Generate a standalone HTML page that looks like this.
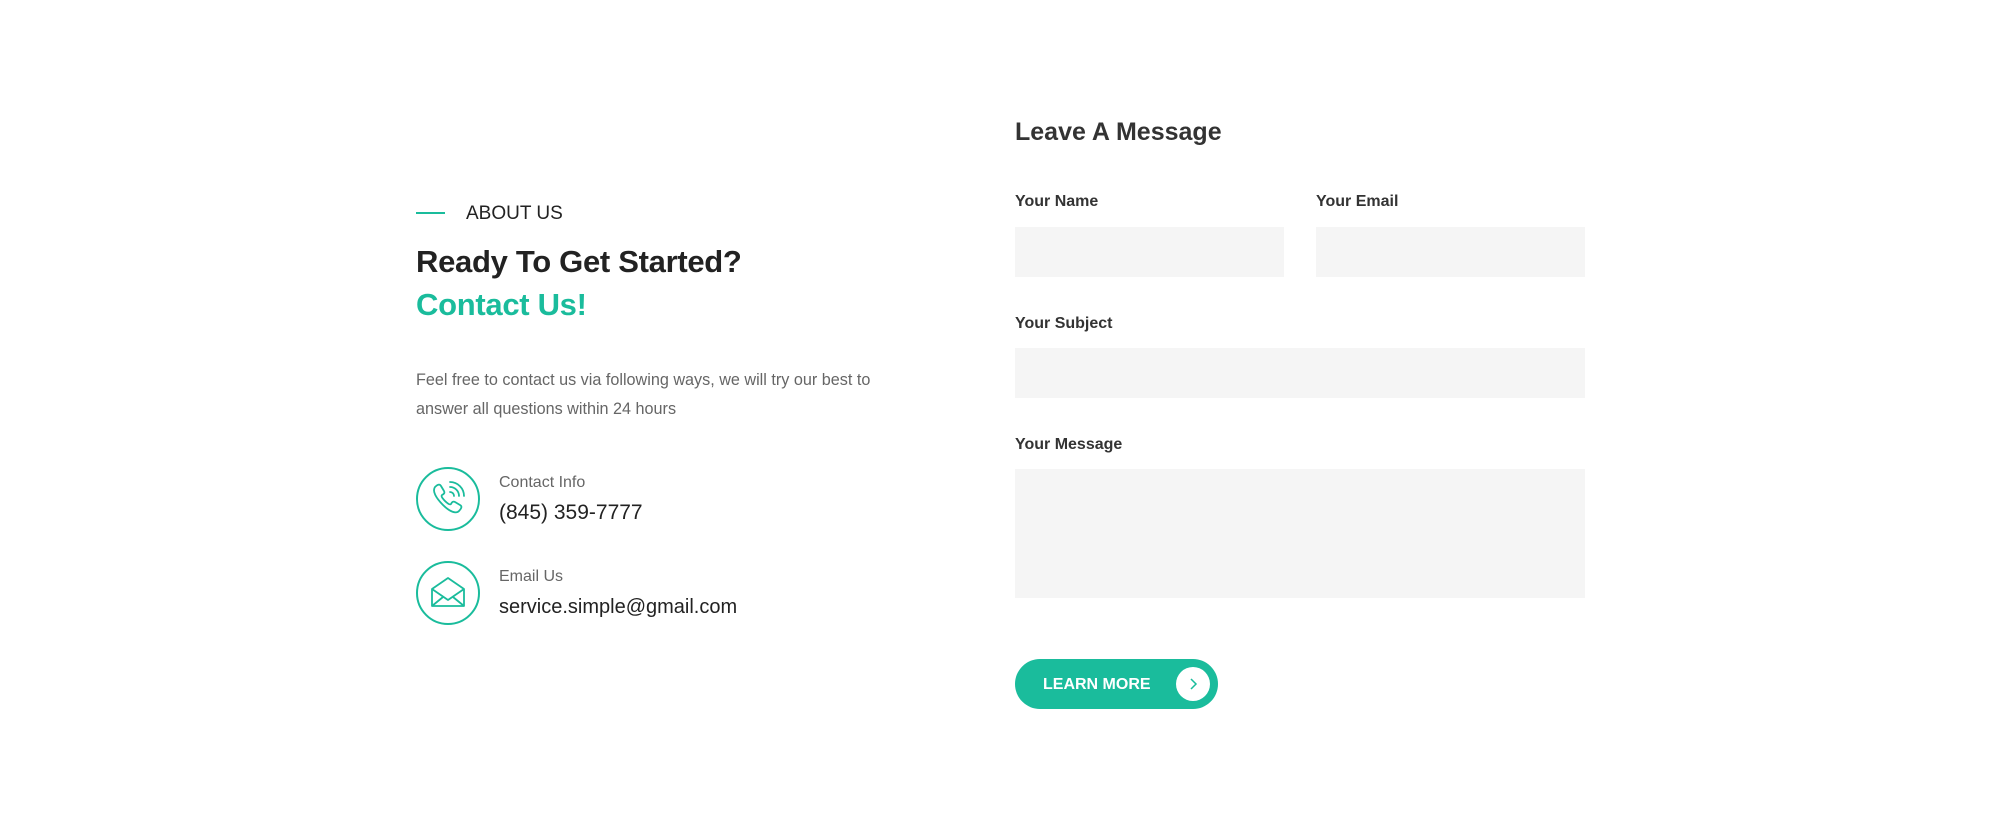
<!DOCTYPE html>
<html><head><style>
*{margin:0;padding:0;box-sizing:border-box}
body{width:2000px;height:830px;background:#fff;font-family:"Liberation Sans",Arial,sans-serif;position:relative;overflow:hidden;color:#222}
.a{position:absolute;white-space:nowrap}
.lbl{font-size:16px;font-weight:bold;color:#333;line-height:20px}
.inp{position:absolute;background:#f5f5f5}
.circ{position:absolute;width:64px;height:64px;border:2px solid #1abc9c;border-radius:50%}
</style></head><body>
<div class="a" style="left:416px;top:212px;width:29px;height:2px;background:#1abc9c"></div>
<div class="a" style="left:466px;top:203px;font-size:19px;line-height:22px;color:#222">ABOUT US</div>
<div class="a" style="left:416px;top:242px;font-size:31px;line-height:40px;font-weight:bold;color:#222;letter-spacing:-0.3px">Ready To Get Started?</div>
<div class="a" style="left:416px;top:285px;font-size:31px;line-height:40px;font-weight:bold;color:#1abc9c;letter-spacing:-0.3px">Contact Us!</div>
<div class="a" style="left:416px;top:366px;font-size:16.2px;line-height:29px;color:#666">Feel free to contact us via following ways, we will try our best to<br>answer all questions within 24 hours</div>

<div class="circ" style="left:416px;top:467px"><svg width="60" height="60" viewBox="0 0 60 60" fill="none" stroke="#1abc9c" stroke-width="1.8" stroke-linejoin="round" stroke-linecap="round"><path d="M17 18c3-3 5-3 6-1l3 5c1 2 0 3-2 4c-1 1 0 3 3 6s5 4 6 3c1-2 2-3 4-2l5 3c2 1 2 3-1 6c-3 3-9 1-16-6s-11-14-8-18z"/><path d="M32 18a9 9 0 0 1 9 9M32 13a14 14 0 0 1 14 14M32 23a4 4 0 0 1 4 4"/></svg></div>
<div class="a" style="left:499px;top:473px;font-size:16px;line-height:20px;color:#666">Contact Info</div>
<div class="a" style="left:499px;top:500px;font-size:21px;line-height:26px;color:#222">(845) 359-7777</div>

<div class="circ" style="left:416px;top:561px"><svg width="60" height="60" viewBox="0 0 60 60" fill="none" stroke="#1abc9c" stroke-width="1.8" stroke-linejoin="round"><path d="M14 26l16-11 16 11v17H14z"/><path d="M14 26l16 11 16-11"/><path d="M14 43l11-9M46 43l-11-9"/></svg></div>
<div class="a" style="left:499px;top:567px;font-size:16px;line-height:20px;color:#666">Email Us</div>
<div class="a" style="left:499px;top:594px;font-size:20px;line-height:26px;color:#222">service.simple@gmail.com</div>

<div class="a" style="left:1015px;top:117px;font-size:25px;line-height:30px;font-weight:bold;color:#333">Leave A Message</div>
<div class="a lbl" style="left:1015px;top:192px">Your Name</div>
<div class="a lbl" style="left:1316px;top:192px">Your Email</div>
<div class="inp" style="left:1015px;top:227px;width:269px;height:50px"></div>
<div class="inp" style="left:1316px;top:227px;width:269px;height:50px"></div>
<div class="a lbl" style="left:1015px;top:314px">Your Subject</div>
<div class="inp" style="left:1015px;top:348px;width:570px;height:50px"></div>
<div class="a lbl" style="left:1015px;top:435px">Your Message</div>
<div class="inp" style="left:1015px;top:469px;width:570px;height:129px"></div>

<div class="a" style="left:1015px;top:659px;width:203px;height:50px;border-radius:25px;background:#1abc9c"></div>
<div class="a" style="left:1043px;top:675px;font-size:16px;line-height:20px;font-weight:bold;color:#fff">LEARN MORE</div>
<div class="a" style="left:1176px;top:667px;width:34px;height:34px;border-radius:50%;background:#fff"><svg width="34" height="34" viewBox="0 0 34 34" fill="none" stroke="#1abc9c" stroke-width="1.5"><path d="M15 12l5 5-5 5"/></svg></div>
</body></html>
